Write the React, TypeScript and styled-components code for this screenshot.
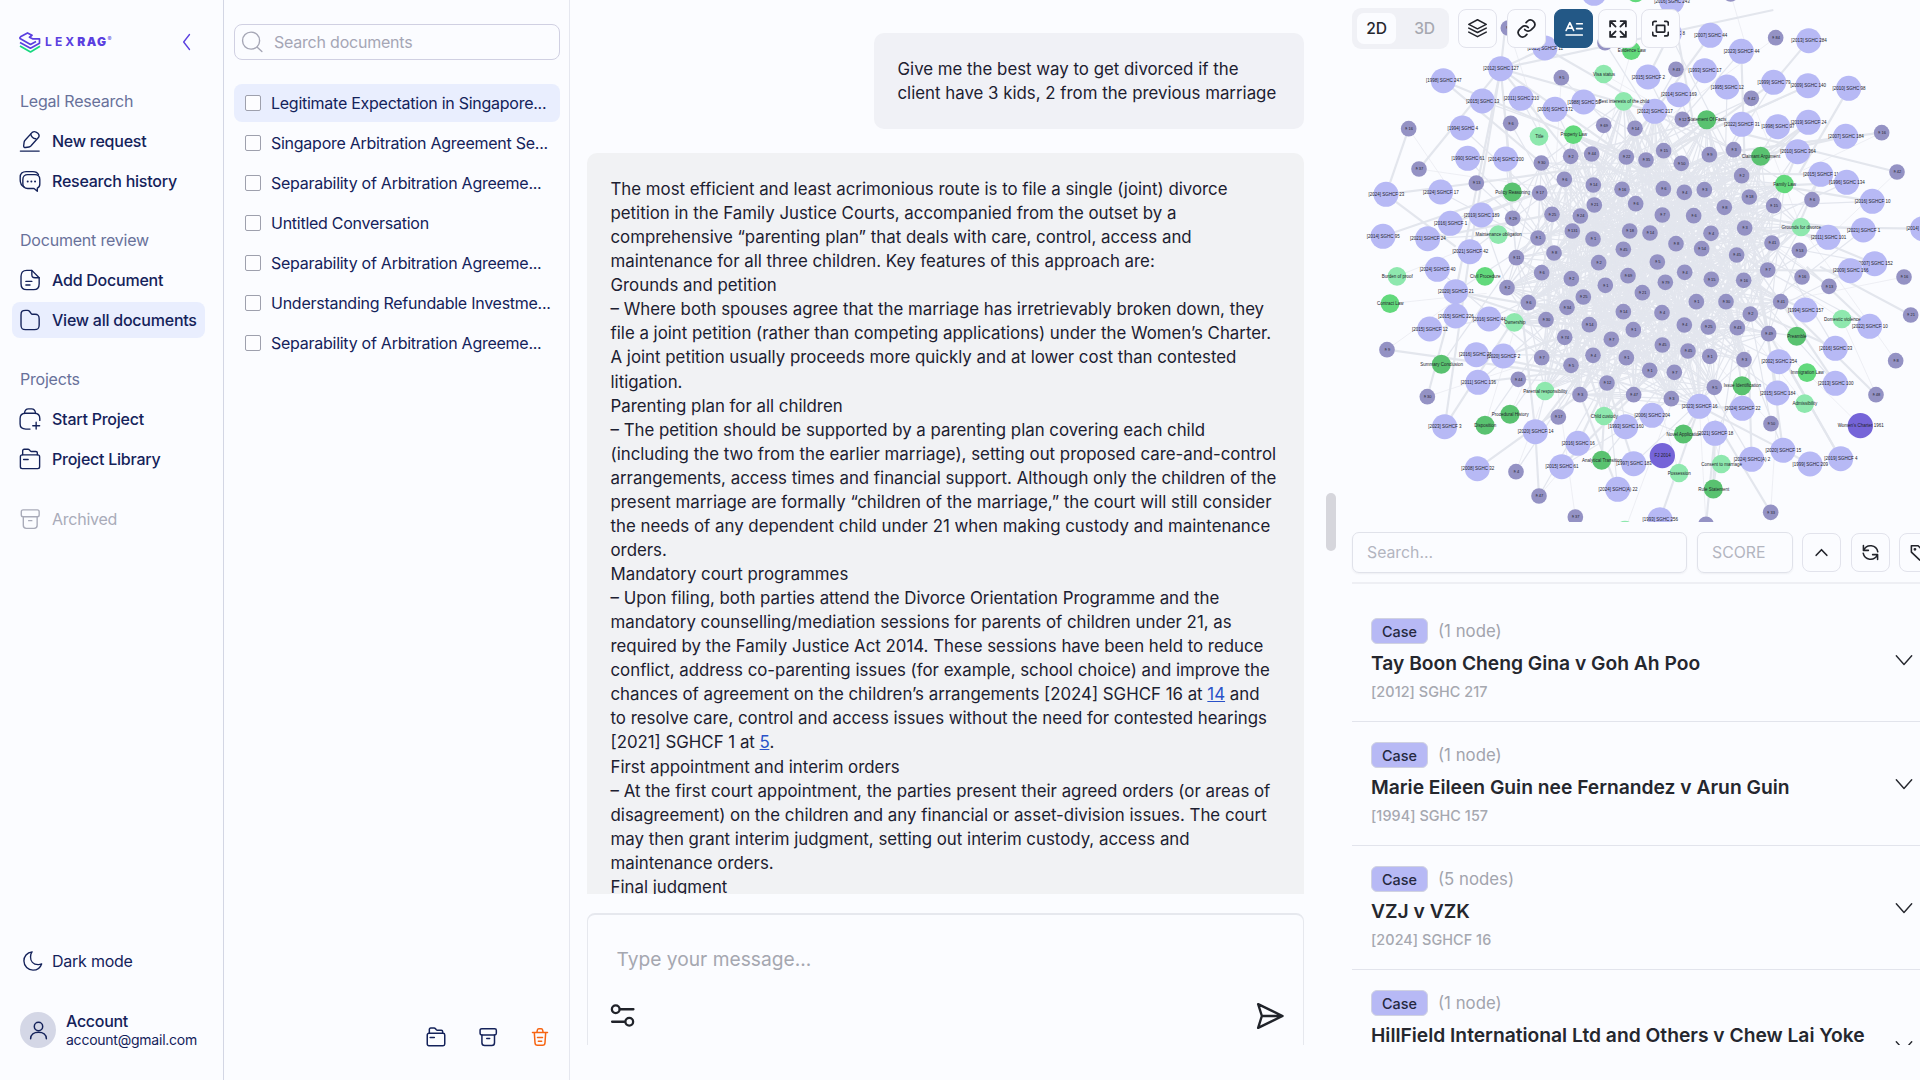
import React from 'react';
import styled, { createGlobalStyle, css } from 'styled-components';

const GlobalStyle = createGlobalStyle`
  *, *::before, *::after { box-sizing: border-box; }
  html, body { margin: 0; padding: 0; background: #fbfcff; }
  body { overflow: hidden; font-family: Inter, "Liberation Sans", sans-serif; }
  button, input { font-family: inherit; }
`;

const navy = '#14225a';

const Shell = styled.div`
  display: grid;
  grid-template-columns: 224px 346px 756px 594px;
  width: 1920px;
  height: 1080px;
  overflow: hidden;
  background: #fbfcff;
  color: ${navy};
`;

/* ---------- icons ---------- */

const Svg = styled.svg<{ $s?: number; $w?: number }>`
  width: ${p => p.$s ?? 24}px;
  height: ${p => p.$s ?? 24}px;
  flex: none;
  fill: none;
  stroke: currentColor;
  stroke-width: ${p => p.$w ?? 1.5};
  stroke-linecap: round;
  stroke-linejoin: round;
`;

const paths: Record<string, React.ReactNode> = {
  pen: <><path d="M1.500 23h20.500" /><path d="M14.400 2.600 6.600 11.200c-.5.5-.9 1.300-1 2l-.5 4c-.1 1.300.8 2.100 2 1.900l3.800-.6c.6-.1 1.500-.6 2-1.100l7.800-8.600c1.400-1.500 2-3.200-.1-5.200-2.100-1.900-4.300-2.500-6.200-1Z" /><path d="M12.800 4.600c.5 2.700 2.600 4.700 5.500 5" /></>,
  chat: <><path d="M5.500 18.500C2.500 17 1.300 14.600 1.300 11V8C1.300 4 3.700 1.800 7.700 1.800h7.500c3 0 5 1 6 3.200" /><path d="M9.500 5h7.800C20.700 5 22.700 7 22.700 10.300v4.900c0 2.200-1 3.900-2.700 4.700v3.300l-3.600-3H9.500C6.200 20.200 4.200 18.200 4.200 15v-4.700C4.200 7 6.200 5 9.500 5Z" /><path d="M9.500 12.500h.01M13.500 12.500h.01M17.500 12.500h.01" strokeWidth="2.2" /></>,
  doc: <><path d="M22 9.500V16c0 4.500-1.700 6.500-6 6.500H8.500C4 22.500 2.200 20.500 2.200 16V8C2.200 3.500 4 1.500 8.500 1.500H14" /><path d="M22 9.500h-4.500c-2.700 0-3.500-.8-3.500-3.500v-4.500l8 8Z" /><path d="M7.500 13.500h6.500M7.500 17.500h4.500" /></>,
  folder: <path d="M22 11v6.500c0 3.800-1.200 5-5 5H7c-3.700 0-4.800-1.200-4.800-5V6.500c0-3.800 1.200-5 5-5h2c1.200 0 1.800.4 2.400 1.200l1.500 2c.4.600.8 1 1.700 1H17.500c3.400 0 4.500 1.300 4.500 5.300Z" />,
  start: <><path d="M12 23H7.500c-4.500 0-6.300-1.300-6.300-5.500v-6C1.200 7.500 3 5.700 7 5.700h10c4 0 5.700 1.800 5.700 5.800v2" /><path d="M6 5.500C6.300 2.600 8 1 10.300 1h3.400C16 1 17.700 2.600 18 5.500M18.700 15.500v7.500M15 19.300h7.500" /></>,
  library: <><rect x="1.500" y="7.500" width="21" height="15" rx="2" /><path d="M4 7.300V3c0-1 .6-1.700 1.700-1.700h4c.8 0 1.200.2 1.700.8l1 1.200c.4.400.7.500 1.200.5h4.800c1 0 1.600.6 1.600 1.500v2M5 12.500h5" /></>,
  archive: <><rect x="2.500" y="2" width="19.500" height="7.500" rx="2" /><path d="M4.700 9.500v9.300c0 2.300 1 3.400 3.300 3.400h8.500c2.300 0 3.300-1.100 3.300-3.400V9.500M10.500 13.800h3.500" /></>,
  trash: <><path d="M3 6.500h18M8.300 6.200l.5-2.500c.2-.9.700-1.500 1.700-1.500h3c1 0 1.500.6 1.700 1.500l.5 2.500M5.200 6.700l.8 12.200c.1 2 1 3.100 3 3.100h6c2 0 2.900-1.100 3-3.100l.8-12.200M9 12.700h6M10 17h4" /></>,
  moon: <path d="M11 2C5.300 2.600 2 7.200 2.100 12c.1 5.800 4.500 10 9.900 10 4.500 0 8-2.600 9.400-6.800-1 .5-2.400.9-3.900.8-5.300-.3-8.300-4-8.200-8.500 0-2.300.4-4 1.700-5.500Z" />,
  user: <><circle cx="12" cy="7.500" r="4.800" /><path d="M3 21.500c0-4.800 4-7.500 9-7.500s9 2.700 9 7.500" /></>,
  search: <><circle cx="11" cy="10.500" r="9.300" /><path d="m18 18 4.800 4.300" /></>,
  left: <path d="M15 3 8 12l7 9" />,
  down: <path d="m4.300 7.700 7.700 8.800 7.700-8.800" />,
  up: <path d="m3.500 16.500 8.500-9 8.500 9" />,
  layers: <><path d="M12 1 23 6.700 12 12.400 1 6.700Z" /><path d="m1 11.500 11 5.600 11-5.600M1 16.500l11 5.800 11-5.800" /></>,
  link: <><path d="M9.800 13.200a5.500 5.500 0 0 0 8 .6l3.300-3.300a5.500 5.500 0 0 0-7.700-7.800L11.500 4.600" /><path d="M14.200 10.800a5.500 5.500 0 0 0-8-.6l-3.300 3.300a5.500 5.500 0 0 0 7.700 7.800l1.900-1.900" /></>,
  label: <><path d="M1.500 14 6.500 3.500 11.500 14M3.500 10.800h6M15.500 5H23M15.500 11.500H23M1.500 20H23" /></>,
  expand: <path d="M15.500 1.500h7v7M22 2l-6.800 6.800M8.500 1.500h-7v7M2 2l6.800 6.800M15.500 22.500h7v-7M22 22l-6.800-6.800M8.500 22.500h-7v-7M2 22l6.800-6.800" />,
  focus: <><rect x="6.200" y="7.500" width="11.800" height="9.500" rx=".8" /><path d="M1 7V4.500c0-1.600 1-2.700 2.700-2.700H6M18 1.800h2.300C22 1.800 23 2.900 23 4.500V7M1 17.300v2.500c0 1.600 1 2.700 2.700 2.700H6M18 22.500h2.300c1.700 0 2.700-1.100 2.700-2.700v-2.500" /></>,
  refresh: <><path d="M2 2v7h7M2.500 8.500A10.500 10.500 0 0 1 22.300 11M22 22v-7h-7M21.500 15.500A10.500 10.500 0 0 1 1.700 13" /></>,
  tag: <><path d="M3 3.500h8.500L21 13c1 1 1 2 0 3l-5 5c-1 1-2 1-3 0L3 11.500Z" /><circle cx="7.500" cy="8" r=".8" /></>,
  options: <><circle cx="5.500" cy="6" r="3.700" /><path d="M9.500 6H22.500M2 18h12" /><circle cx="18.500" cy="18" r="3.700" /></>,
  send: <path d="M2.500 2.500 22 12 2.500 21.500 5.500 12ZM5.500 12H22" />,
};

const Icon = ({ name, size, weight }: { name: string; size?: number; weight?: number }) => (
  <Svg viewBox="0 0 24 24" $s={size} $w={weight}>{paths[name]}</Svg>
);

/* ---------- sidebar ---------- */

const Sidebar = styled.aside`
  display: flex;
  flex-direction: column;
  border-right: 1px solid #d3d6e4;
  padding: 0 18px 28px 12px;
`;

const Brand = styled.div`
  display: flex;
  align-items: center;
  height: 84px;
  padding: 0 8px 0 7px;
  color: #5a3fe0;
`;

const Mark = styled.svg`
  width: 22px;
  height: 21px;
  fill: none;
  stroke-width: 1.7;
  stroke-linejoin: round;
`;

const Word = styled.span`
  margin-left: 4px;
  font-size: 12px;
  line-height: 14px;
  letter-spacing: 3.100px;
  font-weight: 700;
  b { font-weight: 900; letter-spacing: 1.400px; }
  sup { font-size: 6px; line-height: 0; font-weight: 400; vertical-align: 5px; letter-spacing: 0; }
`;

const Collapse = styled.button`
  display: flex;
  margin-left: auto;
  padding: 0;
  border: 0;
  background: none;
  color: #5a3fe0;
`;

const NavSection = styled.section`
  display: flex;
  flex-direction: column;
  gap: 4px;
  margin-bottom: 24px;
`;

const NavTitle = styled.h2`
  margin: 9px 0 9px;
  padding-left: 8px;
  height: 17px;
  font-size: 16px;
  line-height: 17px;
  font-weight: 400;
  letter-spacing: -0.210px;
  color: #68719a;
`;

const NavItem = styled.a<{ $active?: boolean; $muted?: boolean }>`
  display: flex;
  align-items: center;
  gap: 11px;
  width: 193px;
  height: 36px;
  padding-left: 7px;
  border-radius: 8px;
  font-size: 16px;
  font-weight: ${p => (p.$muted ? 400 : 500)};
  letter-spacing: -0.240px;
  white-space: nowrap;
  color: ${p => (p.$muted ? '#a9abb9' : navy)};
  background: ${p => (p.$active ? '#e9eefe' : 'transparent')};
`;

const DarkToggle = styled(NavItem)`
  margin-top: auto;
  padding-left: 10px;
  gap: 8px;
  font-weight: 400;
`;

const Account = styled.div`
  display: flex;
  align-items: center;
  gap: 10px;
  margin-top: 29px;
  padding-left: 8px;
  height: 44px;
`;

const Avatar = styled.span`
  display: grid;
  place-items: center;
  width: 36px;
  height: 36px;
  border-radius: 50%;
  background: #d4d7e6;
`;

const AccountText = styled.div`
  display: flex;
  flex-direction: column;
  font-size: 14px;
  line-height: 18px;
  letter-spacing: -0.240px;
  strong { font-size: 16px; line-height: 20px; font-weight: 500; letter-spacing: -0.300px; }
`;

/* ---------- documents ---------- */

const Documents = styled.section`
  display: flex;
  flex-direction: column;
  border-right: 1px solid #e5e7ef;
  padding: 24px 9px 33px 10px;
`;

const DocSearch = styled.label`
  display: flex;
  align-items: center;
  gap: 11px;
  height: 36px;
  padding-left: 6px;
  border: 1px solid #d0d0e2;
  border-radius: 8px;
  color: #a5a6b5;
  font-size: 16px;
  letter-spacing: -0.220px;
`;

const DocList = styled.div`
  display: flex;
  flex-direction: column;
  gap: 2px;
  margin-top: 24px;
`;

const DocRow = styled.div<{ $active?: boolean }>`
  display: flex;
  align-items: center;
  gap: 10px;
  height: 38px;
  padding: 0 0 1px 11px;
  border-radius: 8px;
  font-size: 16px;
  letter-spacing: -0.260px;
  white-space: nowrap;
  background: ${p => (p.$active ? '#e9eefe' : 'transparent')};
`;

const Box = styled.i`
  width: 16px;
  height: 16px;
  border: 1px solid #9ea0ad;
  border-radius: 2px;
  background: #fdfdff;
`;

const DocActions = styled.div`
  display: flex;
  justify-content: flex-end;
  gap: 32px;
  margin-top: auto;
  padding-right: 10px;
  span:last-child { color: #f76412; }
  span { display: flex; }
`;

/* ---------- chat ---------- */

const Chat = styled.main`
  display: flex;
  flex-direction: column;
  height: 1045px;
  overflow: hidden;
  padding: 32.500px 22px 0 16.500px;
  color: #1c2030;
  font-size: 16.840px;
  line-height: 24.070px;
`;

const Line = styled.div`
  white-space: nowrap;
`;

const Question = styled.div`
  align-self: flex-end;
  width: 430.500px;
  height: 96px;
  flex: none;
  padding: 24.500px 24px;
  border-radius: 10px;
  background: #f0f1f6;
`;

const Answer = styled.div`
  height: 741px;
  flex: none;
  overflow: hidden;
  margin-top: 24.500px;
  padding: 24px;
  border-radius: 10px 10px 0 0;
  background: #f1f2f4;
`;

const Ref = styled.a`
  color: #2a52c9;
  text-decoration: underline;
`;

const Composer = styled.div`
  display: flex;
  flex-direction: column;
  flex: none;
  height: 160px;
  margin-top: 19px;
  padding: 31.500px 18px 0 22px;
  border: 1px solid #e6e8ee;
  border-top-width: 2px;
  border-radius: 8px;
`;

const Placeholder = styled.div`
  padding-left: 7px;
  font-size: 19.200px;
  line-height: 24px;
  color: #a5a7b0;
`;

const ComposerTools = styled.div`
  display: flex;
  justify-content: space-between;
  align-items: center;
  margin-top: 30px;
  color: #20232a;
`;

/* ---------- right panel ---------- */

const Panel = styled.section`
  display: grid;
  grid-template-columns: 14px 580px;
`;

const Handle = styled.div`
  width: 10px;
  height: 58px;
  margin-top: 493px;
  border-radius: 5px;
  background: #d6d6dc;
`;

const PanelBody = styled.div`
  display: flex;
  flex-direction: column;
  height: 1045px;
  overflow: hidden;
`;

const GraphArea = styled.div`
  position: relative;
  height: 522px;
  flex: none;
  overflow: hidden;
`;

const Graph = styled.svg`
  display: block;
  width: 580px;
  height: 522px;
  text { font-family: "Liberation Sans", Arial, sans-serif; fill: #23232b; text-anchor: middle; }
`;

const GraphTools = styled.div`
  position: absolute;
  top: 8px;
  left: 12px;
  display: flex;
  align-items: center;
`;

const Segment = styled.div`
  display: flex;
  width: 97px;
  height: 41px;
  padding: 5px;
  margin-right: 9px;
  border-radius: 9px;
  background: #f0f1f6;
`;

const SegmentItem = styled.button<{ $on?: boolean }>`
  width: ${p => (p.$on ? 39 : 48)}px;
  padding: 0 0 0 ${p => (p.$on ? 0 : 9)}px;
  border: 0;
  border-radius: 7px;
  font-size: 15.600px;
  font-weight: 500;
  letter-spacing: -0.200px;
  white-space: nowrap;
  color: ${p => (p.$on ? '#25272e' : '#a6a8b0')};
  background: ${p => (p.$on ? '#fbfcff' : 'transparent')};
`;

const ToolButton = styled.button<{ $on?: boolean; $gap: number }>`
  display: grid;
  place-items: center;
  width: 39px;
  height: 39px;
  flex: none;
  padding: 0;
  margin-right: ${p => p.$gap}px;
  border: 1px solid #e2e3ec;
  border-radius: 8px;
  color: #22242b;
  background: #fbfcff;
  ${p => p.$on && css`color: #fff; background: #235886; border-color: #235886;`}
`;

const Filters = styled.div`
  display: flex;
  align-items: center;
  gap: 10px;
  height: 62px;
  flex: none;
  margin-left: 12px;
  padding-top: 1px;
  border-bottom: 2px solid #eeeff4;
`;

const Field = styled.div<{ $w: number; $indent: number }>`
  display: flex;
  align-items: center;
  flex: none;
  width: ${p => p.$w}px;
  height: 41px;
  padding-left: ${p => p.$indent}px;
  border: 1px solid #e0e2ea;
  border-radius: 7px;
  box-shadow: 0 1px 2px rgba(30, 35, 60, 0.06);
  font-size: 15.800px;
  color: #b3b5bf;
`;

const FilterButtons = styled.div`
  display: flex;
  margin-left: -1px;
`;

const Results = styled.div`
  display: flex;
  flex-direction: column;
  margin-left: 12px;
  padding-top: 14px;
`;

const Result = styled.article<{ $h: number }>`
  display: flex;
  justify-content: space-between;
  align-items: center;
  height: ${p => p.$h}px;
  flex: none;
  padding: 0 4px 0 19px;
  border-bottom: 1px solid #e2e4ec;
  color: #25272e;
`;

const ResultText = styled.div`
  display: flex;
  flex-direction: column;
  align-self: flex-start;
  padding-top: 20px;
`;

const Tags = styled.div`
  display: flex;
  align-items: center;
  gap: 10px;
  font-size: 16.800px;
  line-height: 26px;
  color: #a2a4ad;
`;

const Badge = styled.span`
  display: grid;
  place-items: center;
  width: 57px;
  height: 26px;
  border: 1px solid #d0d2e2;
  border-radius: 6px;
  background: #b7b9f5;
  font-size: 14.400px;
  font-weight: 500;
  color: #25283f;
`;

const CaseName = styled.h3`
  margin: 6px 0 0;
  font-size: 19.240px;
  line-height: 26px;
  font-weight: 600;
  white-space: nowrap;
`;

const Citation = styled.div`
  margin-top: 6px;
  font-size: 14.400px;
  font-weight: 500;
  line-height: 20px;
  letter-spacing: 0.060px;
  color: #a6a8b0;
`;

/* ---------- graph data ---------- */

type Node = [number, number, string];

const cases: Node[] = [
  [762, -20, ''], [615, 144, '[2015] SGHCF 11'], [482, 206, '[2012] SGHC 127'], [310, 242, '[1998] SGHC 247'], [427, 303, '[2015] SGHC 13'],
  [543, 295, '[2011] SGHC 210'], [645, 328, '[2016] SGHC 172'], [731, 306, '[1988] SGHC 50'], [367, 384, '[1994] SGHC 4'], [383, 475, '[1990] SGHC 61'],
  [497, 477, '[2014] SGHC 200'], [138, 583, '[2024] SGHCF 23'], [302, 576, '[2024] SGHCF 17'], [424, 645, '[2019] SGHC 189'], [331, 670, '[2016] SGHCF 1'],
  [129, 709, '[2014] SGHC 95'], [263, 716, '[2021] SGHCF 24'], [390, 755, '[2021] SGHCF 42'], [292, 808, '[2024] SGHCF 40'], [995, 4, '[2016] SGHC 243'],
  [988, 100, '[2013] SGHC 8'], [1111, 106, '[2007] SGHC 44'], [1204, 154, '[2023] SGHCF 44'], [1406, 122, '[2013] SGHC 284'], [924, 231, '[2015] SGHCF 2'],
  [1094, 212, '[1993] SGHC 17'], [1301, 247, '[1999] SGHC 79'], [1016, 284, '[2014] SGHC 169'], [1161, 261, '[1995] SGHC 12'], [1404, 257, '[2009] SGHC 140'],
  [1526, 265, '[2010] SGHC 98'], [944, 334, '[2012] SGHC 217'], [1205, 373, '[2022] SGHCF 31'], [1313, 380, '[1998] SGHC 97'], [1405, 367, '[2019] SGHCF 24'],
  [1373, 455, '[2010] SGHC 364'], [1517, 409, '[2007] SGHC 184'], [1442, 523, '[2015] SGHCF 11'], [1520, 547, '[1996] SGHC 134'], [1597, 604, '[2016] SGHCF 10'],
  [1570, 690, '[2021] SGHCF 1'], [1465, 712, '[2011] SGHC 101'], [1748, 686, '[2014] SGHC 21'], [1604, 791, '[2007] SGHC 152'], [1531, 812, '[2009] SGHC 166'],
  [347, 875, '[2020] SGHCF 21'], [347, 948, '[2015] SGHC 226'], [447, 957, '[2016] SGHC 44'], [269, 987, '[2015] SGHCF 12'], [409, 1064, '[2016] SGHC 256'],
  [490, 1068, '[2020] SGHCF 2'], [414, 1147, '[2011] SGHC 136'], [314, 1280, '[2023] SGHCF 3'], [586, 1295, '[2020] SGHCF 14'], [857, 1280, '[1993] SGHC 160'],
  [714, 1330, '[2016] SGHC 16'], [665, 1400, '[2015] SGHC 61'], [412, 1406, '[2008] SGHC 32'], [881, 1391, '[1997] SGHC 183'], [833, 1468, '[2024] SGHC(A) 22'],
  [1396, 930, '[1994] SGHC 157'], [1589, 979, '[2022] SGHCF 10'], [1486, 1045, '[2016] SGHC 33'], [1317, 1085, '[2002] SGHC 254'], [1486, 1150, '[2013] SGHC 100'],
  [1312, 1179, '[2015] SGHC 184'], [1078, 1219, '[2023] SGHCF 16'], [1207, 1225, '[2024] SGHCF 22'], [936, 1246, '[2006] SGHC 204'], [1125, 1300, '[2021] SGHCF 18'],
  [1329, 1351, '[2020] SGHCF 15'], [1235, 1378, '[2024] SGHC(A) 2'], [1410, 1392, '[1999] SGHC 209'], [1502, 1376, '[2019] SGHCF 4'], [960, 1559, '[1993] SGHC 256'],
];

const sections: Node[] = [
  [505, 84, '§ 1'], [664, 233, '§ 5'], [512, 370, '§ 6'], [206, 386, '§ 16'], [237, 507, '§ 37'], [791, 376, '§ 69'], [795, 128, '§ 7'], [1172, -18, ''],
  [1307, 113, '§ 84'], [1008, 208, '§ 43'], [1234, 295, '§ 42'], [1027, 358, '§ 12'], [1625, 398, '§ 16'], [1671, 516, '§ 42'], [409, 549, '§ 13'],
  [518, 655, '§ 29'], [1416, 599, '§ 6'], [1378, 751, '§ 53'], [141, 1049, '§ 9'], [262, 1190, '§ 30'], [535, 1138, '§ 44'], [655, 1251, '§ 17'],
  [528, 1415, '§ 4'], [597, 1488, '§ 47'], [706, 1551, '§ 37'], [1386, 831, '§ 16'], [1467, 859, '§ 13'], [1692, 831, '§ 16'], [1712, 945, '§ 21'],
  [1667, 1082, '§ 8'], [1608, 1184, '§ 48'], [1293, 1271, '§ 50'], [1098, 1573, ''], [1292, 1537, '§ 33'],
];

const core: Node[] = [
  [885, 385, '§ 14'], [604, 489, '§ 30'], [692, 469, '§ 2'], [755, 462, '§ 44'], [859, 471, '§ 22'], [918, 480, '§ 35'], [673, 538, '§ 6'],
  [760, 555, '§ 14'], [599, 579, '§ 17'], [846, 568, '§ 16'], [887, 611, '§ 6'], [763, 615, '§ 21'], [636, 643, '§ 25'], [721, 648, '§ 24'],
  [697, 693, '§ 131'], [869, 693, '§ 18'], [594, 714, '§ 1'], [759, 717, '§ 1'], [850, 748, '§ 45'], [642, 759, '§ 8'], [529, 773, '§ 11'],
  [776, 788, '§ 2'], [605, 818, '§ 6'], [971, 452, '§ 15'], [1024, 490, '§ 50'], [1108, 464, '§ 9'], [1181, 449, '§ 3'], [1205, 527, '§ 2'],
  [970, 566, '§ 6'], [1033, 577, '§ 4'], [1093, 569, '§ 3'], [1228, 591, '§ 18'], [1153, 622, '§ 8'], [1301, 617, '§ 15'], [967, 645, '§ 7'],
  [1061, 647, '§ 6'], [930, 699, '§ 14'], [1113, 700, '§ 4'], [1214, 684, '§ 3'], [1008, 731, '§ 8'], [1085, 746, '§ 54'], [1296, 729, '§ 41'],
  [1190, 765, '§ 45'], [952, 786, '§ 5'], [1283, 810, '§ 7'], [1034, 817, '§ 4'], [501, 863, '§ 2'], [565, 908, '§ 6'], [694, 836, '§ 2'],
  [796, 856, '§ 1'], [864, 827, '§ 69'], [730, 891, '§ 25'], [681, 922, '§ 34'], [850, 935, '§ 14'], [618, 959, '§ 30'], [748, 974, '§ 14'],
  [674, 1012, '§ 74'], [880, 989, '§ 1'], [814, 1018, '§ 7'], [605, 1073, '§ 7'], [759, 1066, '§ 4'], [693, 1096, '§ 5'], [859, 1073, '§ 1'],
  [801, 1149, '§ 12'], [720, 1184, '§ 3'], [881, 1184, '§ 47'], [976, 847, '§ 79'], [1114, 838, '§ 15'], [1211, 841, '§ 16'], [907, 878, '§ 21'],
  [1069, 905, '§ 1'], [1158, 905, '§ 30'], [1322, 905, '§ 41'], [966, 938, '§ 4'], [1231, 942, '§ 2'], [1033, 975, '§ 4'], [1105, 981, '§ 25'],
  [1192, 983, '§ 43'], [1286, 1001, '§ 49'], [967, 1035, '§ 45'], [1044, 1053, '§ 45'], [1109, 1069, '§ 1'], [1212, 1079, '§ 3'],
  [929, 1111, '§ 1'], [1003, 1117, '§ 7'], [1123, 1162, '§ 5'], [994, 1196, '§ 3'],
];

const mint: Node[] = [
  [791, 222, 'Visa status'], [851, 304, 'Best interests of the child'], [597, 409, 'Title'], [475, 704, 'Maintenance obligation'], [1383, 681, 'Grounds for divorce'],
  [171, 829, 'Burden of proof'], [523, 967, 'Ownership'], [615, 1173, 'Parental responsibility'], [792, 1248, 'Child custody'], [855, 1590, ''],
  [1506, 957, 'Domestic violence'], [1394, 1211, 'Admissibility'], [1017, 1419, 'Possession'], [1144, 1392, 'Consent to marriage'],
];

const green: Node[] = [
  [887, -21, ''], [874, 152, 'Evidence Law'], [700, 404, 'Property Law'], [1333, 552, 'Family Law'], [150, 911, 'Contract Law'], [435, 829, 'Civil Procedure'],
  [1401, 1118, 'Immigration Law'],
];

const forest: Node[] = [
  [517, 576, 'Policy Reasoning'], [1100, 359, 'Statement Of Facts'], [1262, 469, 'Claimant Argument'], [304, 1093, 'Summary Conclusion'], [435, 1276, 'Disposition'],
  [510, 1243, 'Procedural History'], [785, 1381, 'Analytical Transition'], [1370, 1009, 'Preamble'], [1206, 1157, 'Issue Identification'],
  [1030, 1302, 'Novel Application'], [1120, 1467, 'Rule Statement'],
];

const statutes: Node[] = [[1561, 1277, "Women's Charter 1961"], [967, 1367, 'FJ 2014']];

type Edge = [number, number, number, number];

const strong: Edge[] = [
  [206, 386, 138, 583], [482, 206, 237, 507], [482, 206, 497, 70], [482, 206, 615, 144], [482, 206, 1300, 30], [482, 206, 1030, 360], [482, 206, 692, 469],
  [482, 206, 860, 471], [482, 206, 347, 875], [482, 206, 390, 755], [482, 206, 517, 576], [310, 242, 604, 489], [310, 242, 859, 471], [615, 144, 944, 334],
  [138, 583, 409, 549], [138, 583, 347, 740], [129, 709, 517, 576], [409, 549, 760, 500], [331, 670, 600, 579], [263, 716, 636, 643], [347, 875, 262, 1190],
  [390, 755, 314, 1280], [347, 875, 720, 940], [347, 875, 605, 960], [141, 1049, 720, 1130], [314, 1280, 540, 930], [414, 1147, 720, 1110], [409, 1064, 700, 1120],
  [490, 1068, 700, 1000], [586, 1295, 597, 1488], [586, 1295, 545, 930], [586, 1295, 720, 1120], [412, 1406, 720, 1184], [714, 1330, 801, 1149], [665, 1400, 881, 1184],
  [720, 1184, 833, 1468], [785, 1381, 792, 1248], [881, 1391, 801, 1149], [1406, 122, 1301, 247], [1301, 247, 944, 500], [1404, 257, 971, 452], [1526, 265, 1378, 520],
  [1625, 398, 1108, 464], [1671, 516, 1205, 400], [1517, 409, 1205, 480], [1204, 154, 1215, 527], [1111, 106, 944, 334], [995, 4, 1060, 370], [924, 231, 1000, 80],
  [1405, 367, 1205, 560], [1442, 523, 1100, 520], [1520, 547, 1093, 569], [1597, 604, 1333, 560], [1748, 686, 1383, 681], [1570, 690, 1190, 650], [1465, 712, 1214, 684],
  [1378, 670, 1442, 523], [1604, 791, 1383, 700], [1531, 812, 1190, 810], [1712, 945, 1440, 800], [1396, 930, 1211, 841], [1589, 979, 1400, 800],
  [1486, 1045, 1180, 905], [1608, 1184, 1340, 920], [1486, 1150, 1322, 905], [1502, 1376, 1280, 990], [1502, 1376, 1322, 1060], [1312, 1179, 1260, 880], [1329, 1351, 1280, 980],
  [1410, 1392, 1078, 1219], [1235, 1378, 1225, 1050], [1207, 1225, 1078, 1219], [1292, 1537, 1125, 1260], [960, 1559, 1078, 1219], [1098, 1573, 1125, 1300], [1120, 1467, 1125, 1300],
  [424, 645, 690, 538], [1405, 367, 1260, 470], [1373, 455, 1333, 552], [1030, 1302, 1078, 1219],
];

const faint: Edge[] = [
  [206, 386, 331, 570], [237, 507, 600, 560], [171, 829, 390, 740], [150, 911, 440, 880], [141, 1049, 347, 900], [262, 1190, 535, 1100], [528, 1415, 600, 1220],
  [597, 1488, 714, 1350], [706, 1551, 655, 1180], [855, 1590, 1000, 1196], [435, 1276, 520, 1000], [510, 1243, 620, 1000], [1098, 1573, 1078, 1219], [1292, 1537, 1320, 1100],
  [1172, -18, 1230, 180], [1307, 113, 1000, 340], [1625, 398, 1390, 510], [1671, 516, 1465, 712], [1692, 831, 1322, 905], [1667, 1082, 1383, 681], [1608, 1184, 1506, 957],
  [1561, 1277, 1280, 1000], [1293, 1271, 1109, 1069], [1234, 295, 1383, 681], [505, 84, 645, 520], [1467, 859, 1296, 729], [1506, 957, 1283, 810], [1394, 1211, 1158, 905],
  [1144, 1392, 1044, 1053], [1017, 1419, 930, 1111], [874, 152, 760, 555], [664, 233, 645, 540], [791, 222, 924, 300],
];

/* Deterministic generator for the dense citation mesh between the core nodes. */
const makeRandom = (seed: number) => () => {
  seed = (seed * 1664525 + 1013904223) % 4294967296;
  return seed / 4294967296;
};

const rand = makeRandom(42);
const pick = () => core[Math.floor(rand() * core.length)];
const mesh: Edge[] = [];
for (let i = 0; i < 560; i++) {
  const a = pick();
  const b = pick();
  mesh.push([a[0], a[1], b[0], b[1]]);
}
const hubs: [number, number][] = [
  [851, 304], [792, 1248], [1078, 1219], [1333, 552], [1383, 681], [944, 334], [700, 404], [615, 1173], [523, 967], [1100, 359], [1262, 469],
];
hubs.forEach(h => {
  for (let i = 0; i < 18; i++) {
    const b = pick();
    mesh.push([h[0], h[1], b[0], b[1]]);
  }
});
[...cases, ...forest, ...sections].forEach(c => {
  const near = core
    .map(n => ({ n, d: Math.hypot(n[0] - c[0], n[1] - c[1]) }))
    .sort((p, q) => p.d - q.d);
  if (near[0].d < 330) {
    const b = near[3 + Math.floor(rand() * 14)].n;
    mesh.push([c[0], c[1], b[0], b[1]]);
  }
});

const Edges = ({ list, width, color }: { list: Edge[]; width: number; color: string }) => (
  <g stroke={color} strokeWidth={width}>
    {list.map((e, i) => <line key={i} x1={e[0]} y1={e[1]} x2={e[2]} y2={e[3]} />)}
  </g>
);

const Nodes = ({ list, r, fill, size = 13.5 }: { list: Node[]; r: number; fill: string; size?: number }) => (
  <g fontSize={size}>
    {list.map(([x, y, t], i) => (
      <g key={i}>
        <circle cx={x} cy={y} r={r} fill={fill} />
        <text x={x + 1} y={y + size * 0.37}>{t}</text>
      </g>
    ))}
  </g>
);

/* ---------- content ---------- */

const documents = [
  'Legitimate Expectation in Singapore...', 'Singapore Arbitration Agreement Se...', 'Separability of Arbitration Agreeme...', 'Untitled Conversation',
  'Separability of Arbitration Agreeme...', 'Understanding Refundable Investme...', 'Separability of Arbitration Agreeme...',
];

const answer: React.ReactNode[] = [
  'The most efficient and least acrimonious route is to file a single (joint) divorce',
  'petition in the Family Justice Courts, accompanied from the outset by a',
  'comprehensive “parenting plan” that deals with care, control, access and',
  'maintenance for all three children. Key features of this approach are:',
  'Grounds and petition',
  '– Where both spouses agree that the marriage has irretrievably broken down, they',
  'file a joint petition (rather than competing applications) under the Women’s Charter.',
  'A joint petition usually proceeds more quickly and at lower cost than contested',
  'litigation.',
  'Parenting plan for all children',
  '– The petition should be supported by a parenting plan covering each child',
  '(including the two from the earlier marriage), setting out proposed care-and-control',
  'arrangements, access times and financial support. Although only the children of the',
  'present marriage are formally “children of the marriage,” the court will still consider',
  'the needs of any dependent child under 21 when making custody and maintenance',
  'orders.',
  'Mandatory court programmes',
  '– Upon filing, both parties attend the Divorce Orientation Programme and the',
  'mandatory counselling/mediation sessions for parents of children under 21, as',
  'required by the Family Justice Act 2014. These sessions have been held to reduce',
  'conflict, address co-parenting issues (for example, school choice) and improve the',
  <>chances of agreement on the children’s arrangements [2024] SGHCF 16 at <Ref>14</Ref> and</>,
  'to resolve care, control and access issues without the need for contested hearings',
  <>[2021] SGHCF 1 at <Ref>5</Ref>.</>,
  'First appointment and interim orders',
  '– At the first court appointment, the parties present their agreed orders (or areas of',
  'disagreement) on the children and any financial or asset-division issues. The court',
  'may then grant interim judgment, setting out interim custody, access and',
  'maintenance orders.',
  'Final judgment',
];

const results = [
  { count: '(1 node)', name: 'Tay Boon Cheng Gina v Goh Ah Poo', cite: '[2012] SGHC 217', height: 124 },
  { count: '(1 node)', name: 'Marie Eileen Guin nee Fernandez v Arun Guin', cite: '[1994] SGHC 157', height: 124 },
  { count: '(5 nodes)', name: 'VZJ v VZK', cite: '[2024] SGHCF 16', height: 124 },
  { count: '(1 node)', name: 'HillField International Ltd and Others v Chew Lai Yoke', cite: '', height: 152 },
];

export default function App() {
  return (
    <>
      <GlobalStyle />
      <Shell>
        <Sidebar>
          <Brand>
            <Mark viewBox="0 0 22 21">
              <g stroke="#5a3fe0">
                <path d="M1 5 8.500 .900l4.500 2.400-2.500 1.900 3 1.600h7v4.400l-9 5L1 10.500" />
                <path d="M1 5v1.500l10.500 6 5.500-3" />
              </g>
              <path d="M1 14 11.500 20l9.500-5.700" stroke="#18d880" />
            </Mark>
            <Word>LEX<b>RAG</b><sup>®</sup></Word>
            <Collapse><Icon name="left" size={20} weight={1.600} /></Collapse>
          </Brand>
          <NavSection>
            <NavTitle>Legal Research</NavTitle>
            <NavItem><Icon name="pen" size={22} />New request</NavItem>
            <NavItem><Icon name="chat" size={22} />Research history</NavItem>
          </NavSection>
          <NavSection>
            <NavTitle>Document review</NavTitle>
            <NavItem><Icon name="doc" size={22} />Add Document</NavItem>
            <NavItem $active><Icon name="folder" size={22} />View all documents</NavItem>
          </NavSection>
          <NavSection>
            <NavTitle>Projects</NavTitle>
            <NavItem><Icon name="start" size={22} />Start Project</NavItem>
            <NavItem><Icon name="library" size={22} />Project Library</NavItem>
          </NavSection>
          <NavItem $muted><Icon name="archive" size={22} />Archived</NavItem>
          <DarkToggle><Icon name="moon" size={22} />Dark mode</DarkToggle>
          <Account>
            <Avatar><Icon name="user" size={21} weight={1.700} /></Avatar>
            <AccountText><strong>Account</strong>account@gmail.com</AccountText>
          </Account>
        </Sidebar>

        <Documents>
          <DocSearch><Icon name="search" size={22} />Search documents</DocSearch>
          <DocList>
            {documents.map((d, i) => <DocRow key={i} $active={i === 0}><Box />{d}</DocRow>)}
          </DocList>
          <DocActions>
            <span><Icon name="library" size={20} weight={1.800} /></span>
            <span><Icon name="archive" size={20} weight={1.800} /></span>
            <span><Icon name="trash" size={20} weight={1.800} /></span>
          </DocActions>
        </Documents>

        <Chat>
          <Question>
            <Line>Give me the best way to get divorced if the</Line>
            <Line>client have 3 kids, 2 from the previous marriage</Line>
          </Question>
          <Answer>{answer.map((l, i) => <Line key={i}>{l}</Line>)}</Answer>
          <Composer>
            <Placeholder>Type your message...</Placeholder>
            <ComposerTools>
              <Icon name="options" size={25} weight={2.200} />
              <Icon name="send" size={30} weight={1.900} />
            </ComposerTools>
          </Composer>
        </Chat>

        <Panel>
          <Handle />
          <PanelBody>
            <GraphArea>
              <Graph viewBox="0 0 1740 1566">
                <Edges list={faint} width={2.500} color="#eaecf2" />
                <Edges list={mesh} width={3.600} color="#e3e6ee" />
                <Edges list={strong} width={6.500} color="#e3e6ed" />
                <Nodes list={cases} r={37.500} fill="#b7b9f5" />
                <Nodes list={[...sections, ...core]} r={23.500} fill="#9492c4" size={12} />
                <Nodes list={mint} r={28} fill="#8ee8ae" />
                <Nodes list={green} r={28} fill="#62d97c" />
                <Nodes list={forest} r={28.500} fill="#59c270" />
                <Nodes list={statutes} r={38} fill="#7564d8" />
              </Graph>
              <GraphTools>
                <Segment><SegmentItem $on>2D</SegmentItem><SegmentItem>3D</SegmentItem></Segment>
                <ToolButton $gap={10}><Icon name="layers" size={19} weight={1.900} /></ToolButton>
                <ToolButton $gap={8}><Icon name="link" size={19} weight={2.200} /></ToolButton>
                <ToolButton $gap={5} $on><Icon name="label" size={18} weight={2.200} /></ToolButton>
                <ToolButton $gap={4}><Icon name="expand" size={18} weight={2.400} /></ToolButton>
                <ToolButton $gap={0}><Icon name="focus" size={17} weight={2.400} /></ToolButton>
              </GraphTools>
            </GraphArea>
            <Filters>
              <Field $w={335} $indent={14}>Search...</Field>
              <Field $w={96} $indent={14}>SCORE</Field>
              <FilterButtons>
                <ToolButton $gap={10}><Icon name="up" size={15} weight={2.600} /></ToolButton>
                <ToolButton $gap={9}><Icon name="refresh" size={17} weight={2.200} /></ToolButton>
                <ToolButton $gap={0}><Icon name="tag" size={19} weight={2} /></ToolButton>
              </FilterButtons>
            </Filters>
            <Results>
              {results.map(r => (
                <Result key={r.name} $h={r.height}>
                  <ResultText>
                    <Tags><Badge>Case</Badge>{r.count}</Tags>
                    <CaseName>{r.name}</CaseName>
                    {r.cite && <Citation>{r.cite}</Citation>}
                  </ResultText>
                  <Icon name="down" size={24} weight={1.400} />
                </Result>
              ))}
            </Results>
          </PanelBody>
        </Panel>
      </Shell>
    </>
  );
}
